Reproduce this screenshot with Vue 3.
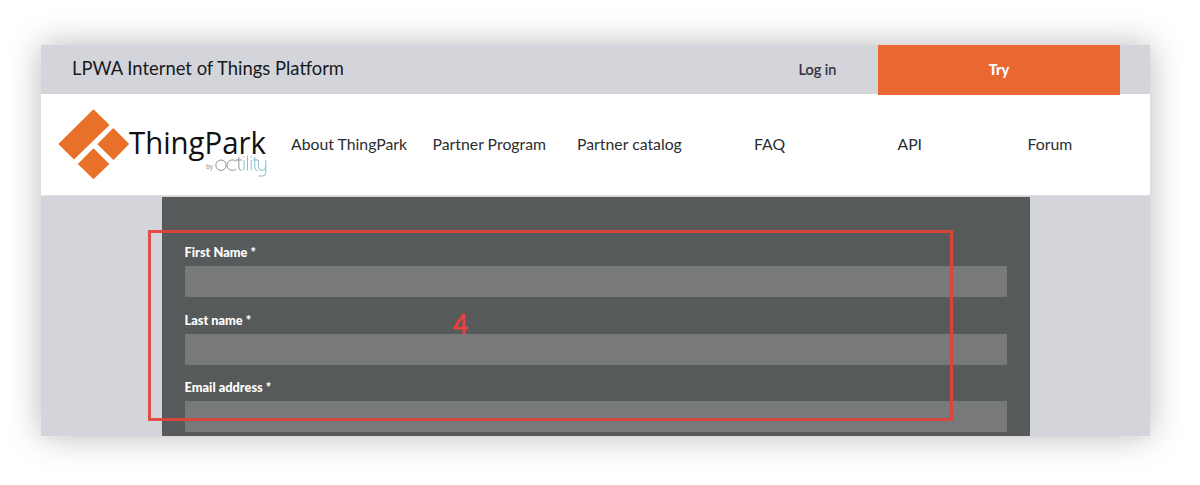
<script setup>
const links = ['About ThingPark', 'Partner Program', 'Partner catalog', 'FAQ', 'API', 'Forum']
const fields = ['First Name *', 'Last name *', 'Email address *']
</script>

<template>
  <div class="stage">
    <div class="frame">
      <div class="topbar">
        <svg class="tagline" width="280" height="30"><text x="1" y="20" textLength="272">LPWA Internet of Things Platform</text></svg>
        <a class="login">Log in</a>
        <a class="try">Try</a>
      </div>
      <header class="header">
        <svg class="logo" viewBox="55 100 224 90" width="224" height="90">
          <g fill="#e87029">
            <path d="M58.3 144 93.5 109.3 109.5 125 74 159.5Z" />
            <path d="M113.3 128 129.2 144 113.5 160 97.3 144.3Z" />
            <path d="M93.5 148.3 109.3 164 93.5 179.3 77.8 164Z" />
          </g>
          <text class="brand" x="129" y="154" textLength="137" lengthAdjust="spacingAndGlyphs">ThingPark</text>
          <text class="by" x="206" y="169" textLength="7" lengthAdjust="spacingAndGlyphs">by</text>
          <g fill="none" stroke-width="1">
            <g stroke="#8e969b">
              <circle cx="221" cy="165.2" r="5.2" />
              <path d="M236 161.4A5.3 5.3 0 1 0 236 169" />
              <path d="M238.8 157V167Q238.8 170.5 241.5 170.5M236 160H242" />
            </g>
            <g stroke="#86bdd4">
              <path d="M244 160V170.5M244 156V157.5M247.5 155.5V170.5M251.2 160V170.5M251.2 156V157.5" />
              <path d="M254.8 157V167Q254.8 170.5 257.5 170.5M252.8 160H258" />
              <path d="M258.5 160V166.5Q258.5 170.5 262 170.5Q265.8 170.5 265.8 166.5V160M265.8 166V172.5Q265.8 176 262.5 176H258.5" />
            </g>
          </g>
        </svg>
        <nav class="nav">
          <a v-for="link in links" :key="link">{{ link }}</a>
        </nav>
      </header>
      <main class="main">
        <form class="form">
          <label v-for="field in fields" :key="field" class="field">
            <span>{{ field }}</span>
            <i class="input"></i>
          </label>
        </form>
      </main>
    </div>
    <div class="marker"><span>4</span></div>
  </div>
</template>

<style>
body { background: #fff; }
</style>

<style scoped>
* { box-sizing: border-box; }
.stage {
  position: relative;
  height: 485px;
  padding: 45px 50px 49px 41px;
  overflow: hidden;
  font-family: Lato, "Open Sans", sans-serif;
  color: #2b2e30;
}
.frame {
  height: 391px;
  display: flex;
  flex-direction: column;
  background: #d4d5db;
  box-shadow: 0 0 32px rgba(0, 0, 0, 0.28);
}
.topbar { display: flex; height: 49px; flex: none; padding: 0 30px; align-items: stretch; }
.tagline { margin-top: 10px; font-size: 18.4px; fill: #17191b; }
.login {
  width: 121px;
  margin-left: auto;
  text-align: center;
  font-size: 14.4px;
  line-height: 49px;
  color: #33353f;
  font-weight: 500;
  -webkit-text-stroke: 0.2px #33353f;
}
.try {
  width: 242px;
  height: 50px;
  background: #e96831;
  color: #fff;
  text-align: center;
  font-size: 14.4px;
  line-height: 49px;
  font-weight: 900;
  position: relative;
}
.header {
  height: 102px;
  flex: none;
  display: flex;
  align-items: center;
  padding: 0 30px 0 14px;
  background: #fff;
  border-bottom: 1px solid #dfe0e4;
}
.logo { flex: none; }
.brand { font: 31.5px "Open Sans", sans-serif; fill: #111; }
.by { font: 7px "Open Sans", sans-serif; fill: #888; }
.nav { flex: 1; display: grid; grid-template-columns: repeat(6, 1fr); text-align: center; font-size: 15.8px; line-height: 20px; margin-top: -2px; white-space: nowrap; }
.main { flex: 1; padding: 1px 120.5px 0 120.5px; min-height: 0; }
.form { height: 100%; padding: 46px 23px 0; background: #575a5a; overflow: hidden; }
.field { display: block; height: 67.7px; color: #fff; font-size: 12.8px; line-height: 19px; font-weight: 900; }
.field span { display: block; height: 23px; }
.input { display: block; height: 31px; background: #78797a; }
.marker {
  position: absolute;
  left: 148px;
  top: 230px;
  width: 805px;
  height: 191px;
  border: 3px solid rgba(226, 66, 58, 0.92);
}
.marker span { position: absolute; left: 302px; top: 75px; font-size: 26px; line-height: 32px; color: #ee3f3a; -webkit-text-stroke: 0.5px #ee3f3a; }
</style>
